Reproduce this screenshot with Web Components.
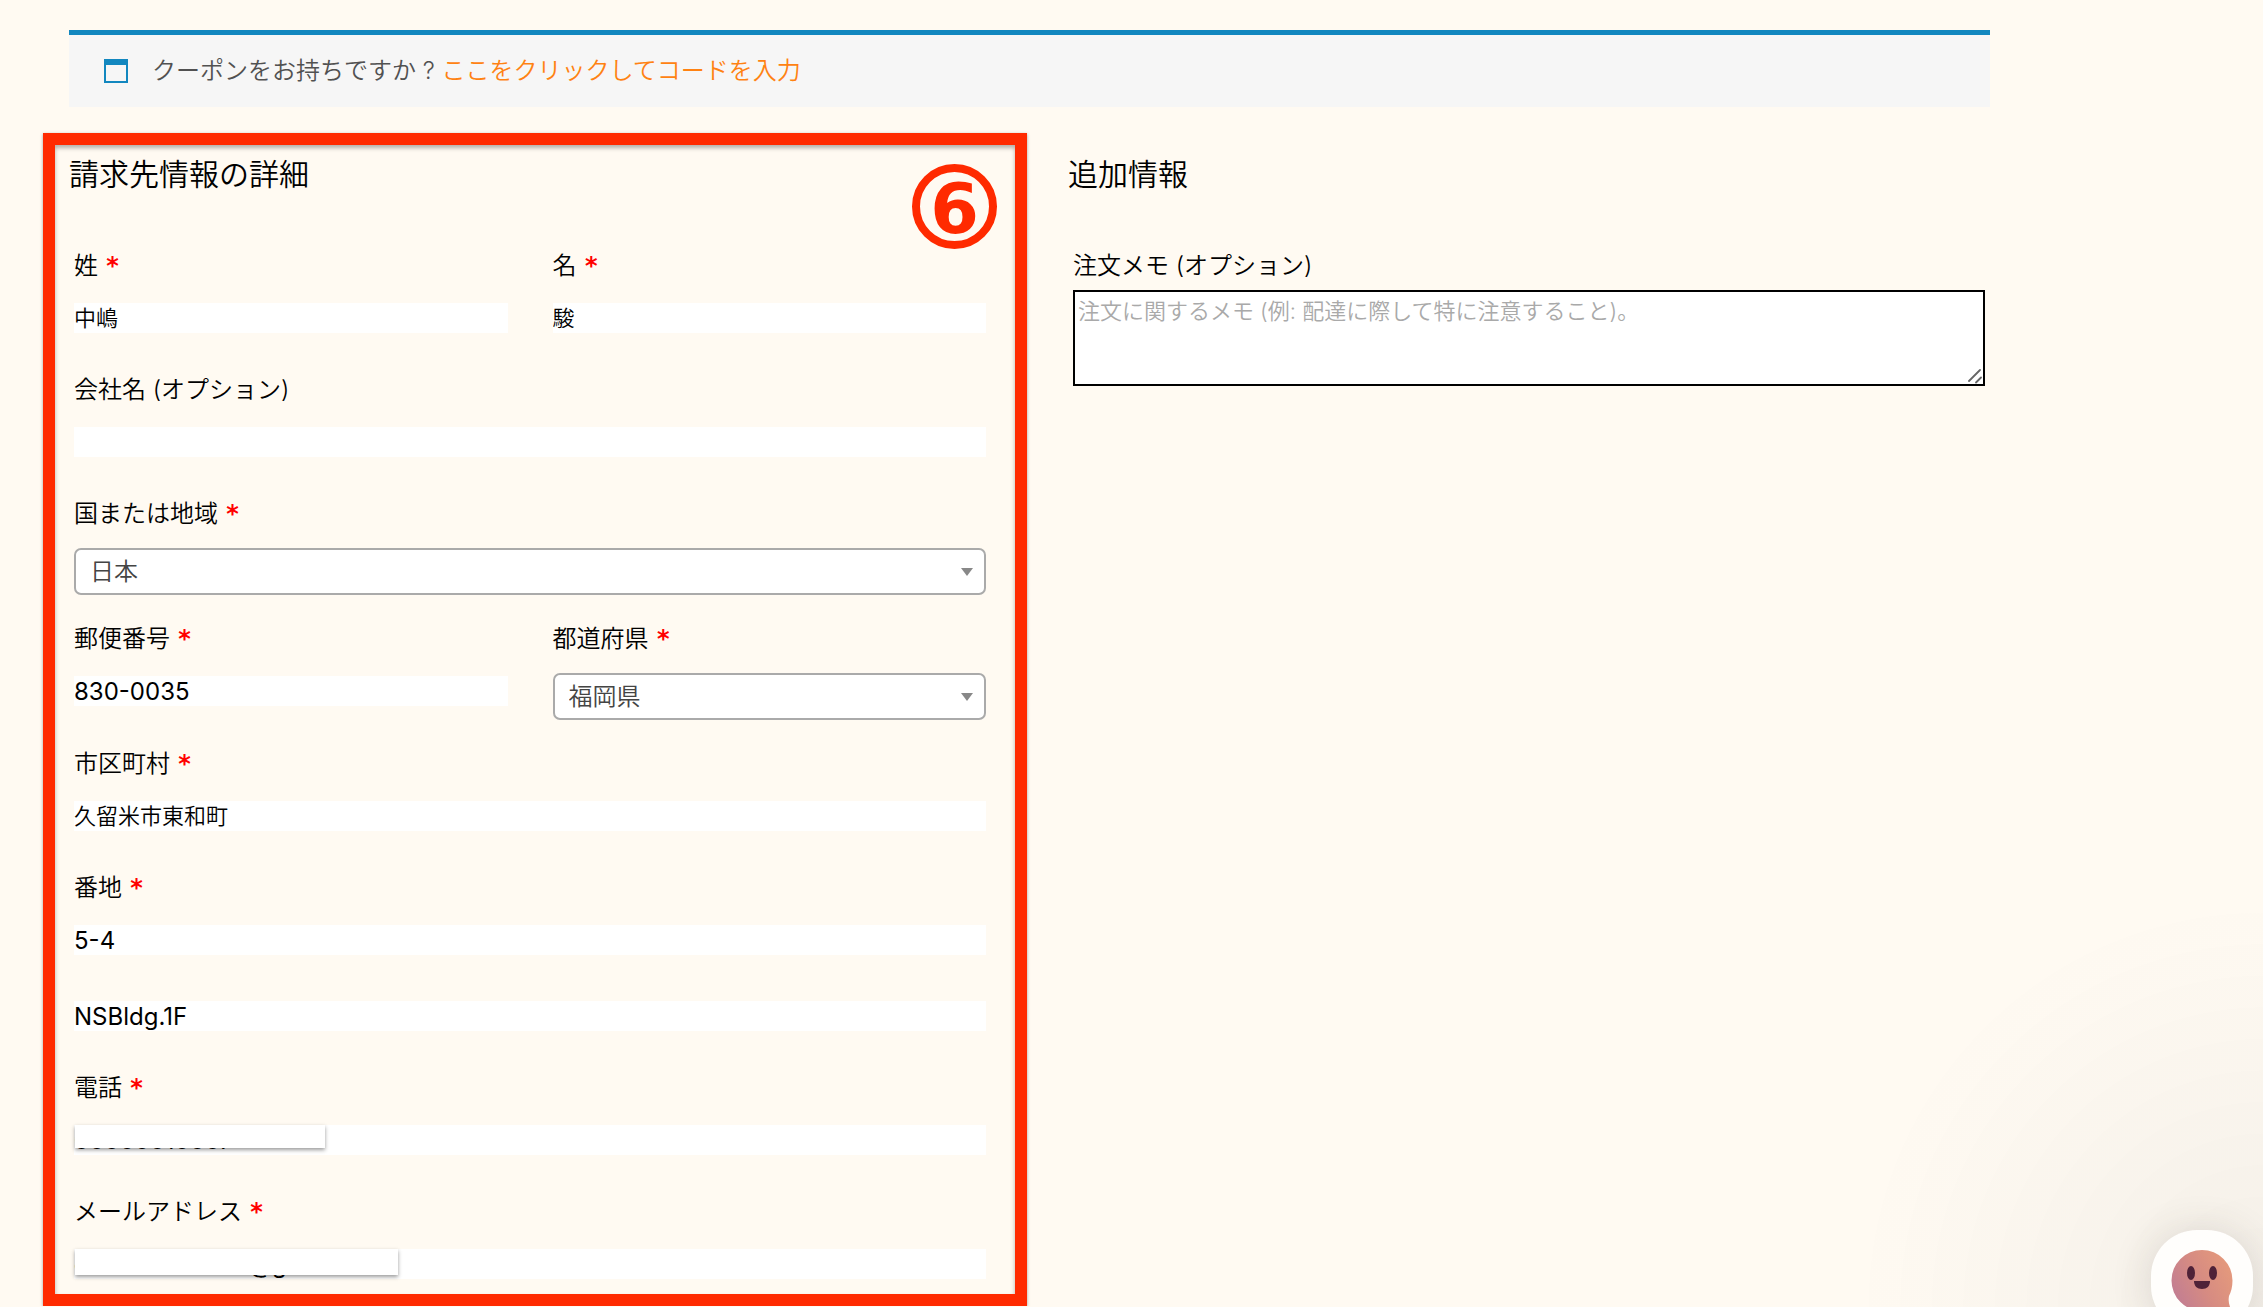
<!DOCTYPE html>
<html lang="ja">
<head>
<meta charset="utf-8">
<title>お支払い</title>
<style>
    body {
        margin: 0;
        background-color: #fffaf2;
        color: #000;
        font-family: Inter, "Noto Sans CJK JP", sans-serif;
        font-size: 24px;
        font-weight: 350;
    }
</style>
</head>
<body>
<checkout-page>
    <coupon-notice slot="notice">クーポンをお持ちですか ? <a href="#">ここをクリックしてコードを入力</a></coupon-notice>

    <form-section heading="請求先情報の詳細" marked="6">
        <field-pair>
            <text-field label="姓" value="中嶋" required></text-field>
            <text-field label="名" value="駿" required></text-field>
        </field-pair>
        <text-field label="会社名 (オプション)"></text-field>
        <select-field label="国または地域" value="日本" required></select-field>
        <field-pair>
            <text-field label="郵便番号" value="830-0035" latin required></text-field>
            <select-field label="都道府県" value="福岡県" required></select-field>
        </field-pair>
        <text-field label="市区町村" value="久留米市東和町" required></text-field>
        <text-field label="番地" value="5-4" latin required></text-field>
        <text-field name="番地 2" value="NSBldg.1F" latin></text-field>
        <text-field label="電話" value="00000010007" latin cover="phone" required></text-field>
        <text-field label="メールアドレス" value="customer.name@gmail.com" latin cover="mail" required></text-field>
    </form-section>

    <form-section heading="追加情報">
        <note-field label="注文メモ (オプション)" placeholder="注文に関するメモ (例: 配達に際して特に注意すること)。"></note-field>
    </form-section>

    <chat-button slot="chat"></chat-button>
</checkout-page>

<script>
const labelStyle = `
    :host {
        display: block;
        min-width: 0;
    }
    label {
        display: block;
        line-height: 48px;
    }
    abbr {
        color: #f00;
        font-family: "DejaVu Sans", sans-serif;
        font-weight: 700;
        line-height: 24px;
        text-decoration: none;
    }
`

function labelFor(el) {
    if (!el.hasAttribute('label')) return ''
    const star = el.hasAttribute('required') ? '<abbr title="必須">&nbsp;*</abbr>' : ''
    return `<label for="control">${el.getAttribute('label')}${star}</label>`
}

class CheckoutPage extends HTMLElement {
    constructor() {
        super()
        this.attachShadow({ mode: 'open' }).innerHTML = `
        <style>
            :host {
                display: block;
                padding: 30px 273px 14px 69px;
            }
            main {
                display: grid;
                grid-template-columns: 48% 48%;
                justify-content: space-between;
                align-items: start;
                margin-top: 49px;
            }
        </style>
        <slot name="notice"></slot>
        <main><slot></slot></main>
        <slot name="chat"></slot>
        `
    }
}

class CouponNotice extends HTMLElement {
    constructor() {
        super()
        this.attachShadow({ mode: 'open' }).innerHTML = `
        <style>
            :host {
                display: flex;
                align-items: center;
                gap: 24px;
                padding: 18px 35px;
                border-top: 5px solid #1287bf;
                background-color: #f6f6f6;
                color: #515151;
                line-height: 36px;
            }
            svg {
                flex: none;
            }
            ::slotted(a) {
                color: #ff8212;
                text-decoration: none;
            }
        </style>
        <svg width="24" height="24" viewBox="0 0 24 24" aria-hidden="true">
            <path d="M0 0h24v24H0zM2 6v16h20V6z" fill="#1287bf" fill-rule="evenodd"/>
        </svg>
        <span><slot></slot></span>
        `
    }
}

class FormSection extends HTMLElement {
    connectedCallback() {
        const mark = this.getAttribute('marked')
        this.attachShadow({ mode: 'open' }).innerHTML = `
        <style>
            :host {
                display: block;
                position: relative;
                min-width: 0;
            }
            h3 {
                margin: 0 0 50px;
                font-size: 30px;
                font-weight: inherit;
                line-height: 36px;
            }
            .fields {
                display: flex;
                flex-direction: column;
                gap: 20px;
                padding: 0 5px;
            }
            /* red marker drawn over the section */
            .frame {
                position: absolute;
                inset: -23px -36px -14px -26px;
                border: 12px solid #ff2a00;
                box-shadow: 0 1px 3px rgba(0, 0, 0, .35), inset 0 3px 4px rgba(0, 0, 0, .3);
                pointer-events: none;
            }
            .number {
                position: absolute;
                top: 19px;
                right: 18px;
                box-sizing: border-box;
                width: 85px;
                height: 85px;
                border: 8px solid #ff2a00;
                border-radius: 50%;
                color: #ff2a00;
                font: 700 70px/74px "DejaVu Sans", sans-serif;
                text-align: center;
            }
        </style>
        <h3>${this.getAttribute('heading')}</h3>
        <div class="fields"><slot></slot></div>
        ${mark ? `<div class="frame"><span class="number">${mark}</span></div>` : ''}
        `
    }
}

class FieldPair extends HTMLElement {
    constructor() {
        super()
        this.attachShadow({ mode: 'open' }).innerHTML = `
        <style>
            :host {
                display: grid;
                grid-template-columns: 1fr 1fr;
                gap: 45px;
            }
        </style>
        <slot></slot>
        `
    }
}

class TextField extends HTMLElement {
    connectedCallback() {
        const name = this.getAttribute('name')
        const cover = this.getAttribute('cover')
        this.attachShadow({ mode: 'open' }).innerHTML = `
        <style>
            ${labelStyle}
            .box {
                position: relative;
                padding: 13px 0;
            }
            input {
                display: block;
                box-sizing: border-box;
                width: 100%;
                height: 30px;
                padding: 0 0 4px;
                border: 0;
                outline: 0;
                background-color: #fff;
                color: #000;
                font: inherit;
                font-size: 22px;
                line-height: 26px;
            }
            :host([latin]) input {
                padding: 0;
                font-size: 24px;
                font-weight: 400;
                line-height: normal;
            }
            .cover {
                position: absolute;
                top: 13px;
                left: 1px;
                background-color: #fff;
                box-shadow: 0 2px 4px rgba(0, 0, 0, .4);
            }
            .phone {
                width: 250px;
                height: 23px;
            }
            .mail {
                width: 323px;
                height: 26px;
            }
        </style>
        ${labelFor(this)}
        <div class="box">
            <input id="control" type="text" value="${this.getAttribute('value') || ''}"${name ? ` aria-label="${name}"` : ''}>
            ${cover ? `<div class="cover ${cover}"></div>` : ''}
        </div>
        `
    }
}

class SelectField extends HTMLElement {
    connectedCallback() {
        this.attachShadow({ mode: 'open' }).innerHTML = `
        <style>
            ${labelStyle}
            .box {
                position: relative;
                padding-top: 10px;
            }
            select {
                display: block;
                box-sizing: border-box;
                width: 100%;
                height: 47px;
                padding: 0 40px 0 14px;
                border: 2px solid #aaa;
                border-radius: 7px;
                outline: 0;
                appearance: none;
                background-color: #fff;
                color: #444;
                font: inherit;
            }
            svg {
                position: absolute;
                right: 13px;
                bottom: 19px;
                pointer-events: none;
            }
        </style>
        ${labelFor(this)}
        <div class="box">
            <select id="control"><option>${this.getAttribute('value')}</option></select>
            <svg width="12" height="8" viewBox="0 0 12 8" aria-hidden="true"><path d="M0 0h12L6 8z" fill="#888"/></svg>
        </div>
        `
    }
}

class NoteField extends HTMLElement {
    connectedCallback() {
        this.attachShadow({ mode: 'open' }).innerHTML = `
        <style>
            ${labelStyle}
            .box {
                position: relative;
            }
            textarea {
                display: block;
                box-sizing: border-box;
                width: 100%;
                height: 96px;
                padding: 3px;
                border: 2px solid #000;
                border-radius: 0;
                outline: 0;
                background-color: #fff;
                color: #000;
                font: inherit;
                font-size: 22px;
                line-height: 32px;
                resize: none;
            }
            textarea::placeholder {
                color: #a9a9a9;
                opacity: 1;
            }
            svg {
                position: absolute;
                right: 3px;
                bottom: 2px;
                pointer-events: none;
            }
        </style>
        ${labelFor(this)}
        <div class="box">
            <textarea id="control" placeholder="${this.getAttribute('placeholder')}"></textarea>
            <svg width="15" height="15" viewBox="0 0 15 15" aria-hidden="true">
                <path d="M2 12L13 1M9 13.500L14 8.500" fill="none" stroke="#666" stroke-width="1.800" stroke-linecap="round"/>
            </svg>
        </div>
        `
    }
}

class ChatButton extends HTMLElement {
    constructor() {
        super()
        this.attachShadow({ mode: 'open' }).innerHTML = `
        <style>
            :host {
                position: fixed;
                right: 0;
                bottom: 0;
                display: flex;
                justify-content: flex-end;
                align-items: flex-end;
                box-sizing: border-box;
                width: 410px;
                height: 410px;
                padding-right: 10px;
                overflow: hidden;
                background: radial-gradient(circle 410px at bottom right, rgba(29, 39, 54, .05), rgba(29, 39, 54, 0));
                pointer-events: none;
            }
            button {
                display: flex;
                flex: none;
                justify-content: center;
                align-items: center;
                width: 102px;
                height: 102px;
                margin-bottom: -25px;
                padding: 0;
                border: 0;
                border-radius: 46px;
                background-color: #fffefc;
                box-shadow: 0 2px 40px rgba(70, 60, 50, .16);
                pointer-events: auto;
            }
        </style>
        <button type="button" aria-label="チャット">
            <svg width="64" height="64" viewBox="0 0 64 64" aria-hidden="true">
                <defs>
                    <linearGradient id="skin" x1="1" y1=".3" x2="0" y2=".8">
                        <stop offset="0" stop-color="#e59a7c"/>
                        <stop offset=".5" stop-color="#d68b82"/>
                        <stop offset="1" stop-color="#c07c94"/>
                    </linearGradient>
                </defs>
                <path d="M32 1a30.500 30.500 0 0 0 0 61h30c-3-5-4-10-3-15c2-4 3.500-9 3.500-15.500A30.500 30.500 0 0 0 32 1z" fill="url(#skin)"/>
                <ellipse cx="21" cy="24" rx="4" ry="7" fill="#4f2238"/>
                <ellipse cx="43" cy="24" rx="4" ry="7" fill="#4f2238"/>
                <path d="M24 32h16c0 5-3 8-8 8s-8-3-8-8z" fill="#4f2238"/>
            </svg>
        </button>
        `
    }
}

customElements.define('checkout-page', CheckoutPage)
customElements.define('coupon-notice', CouponNotice)
customElements.define('form-section', FormSection)
customElements.define('field-pair', FieldPair)
customElements.define('text-field', TextField)
customElements.define('select-field', SelectField)
customElements.define('note-field', NoteField)
customElements.define('chat-button', ChatButton)
</script>
</body>
</html>
